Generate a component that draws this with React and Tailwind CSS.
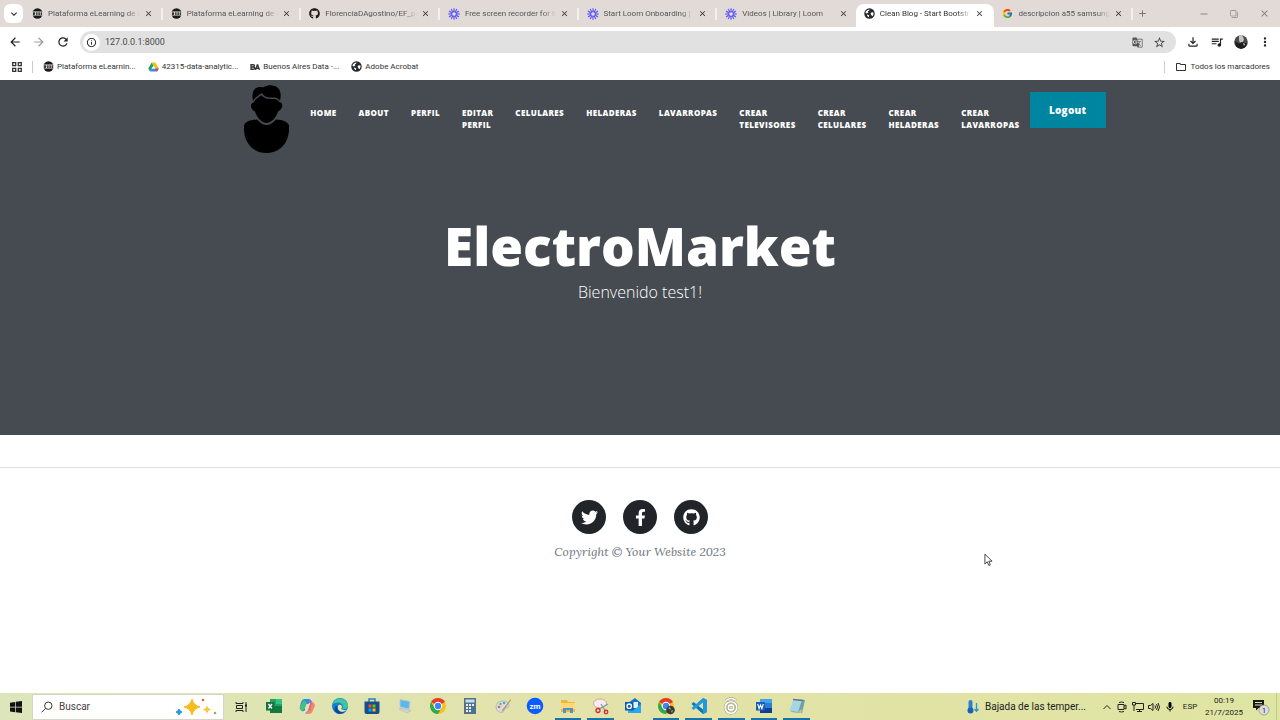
import React from "react";
import {
  MdClose, MdArrowBack, MdArrowForward, MdRefresh, MdInfoOutline, MdStarBorder, MdGTranslate,
  MdOutlineFileDownload, MdQueueMusic, MdMoreVert, MdOutlineFolder, MdKeyboardArrowDown, MdAdd,
  MdFilterNone, MdMic,
} from "react-icons/md";
import { FaTwitter, FaFacebookF, FaGithub } from "react-icons/fa";
import { FcGoogle } from "react-icons/fc";

const Dhouse = () => (
  <svg viewBox="0 0 12 12" className="size-[11px] shrink-0">
    <circle cx="6" cy="6" r="5.6" fill="#191919" />
    <rect x="0" y="3.8" width="12" height="4.4" rx="1" fill="#e8e8e8" />
    <path d="M1 4.5h1.6q1 0 1 1.5t-1 1.5H1zM4.5 4.5h1.6v3H4.5zM7 4.5h1.6v3H7zM9.4 4.5h1.6v3H9.4z" fill="#333" />
  </svg>
);

const Loom = () => (
  <svg viewBox="0 0 24 24" className="size-[12px] shrink-0">
    <g stroke="#625df5" strokeWidth="2.400">
      {[0, 30, 60, 90, 120, 150].map((a) => (
        <path key={a} d="M12 0.5v23" transform={`rotate(${a} 12 12)`} />
      ))}
    </g>
    <circle cx="12" cy="12" r="6" fill="#625df5" />
    <circle cx="12" cy="12" r="3.600" fill="#e6e0f0" />
  </svg>
);

const Globe = () => (
  <svg viewBox="0 0 16 16" className="size-[11px] shrink-0">
    <circle cx="8" cy="8" r="7.6" fill="#27292b" />
    <path d="M2.500 5.500C4 3.500 5.500 2.300 8 2.200L7.500 4l-1.800.8.5 1.700L4 8 2.200 7.200zM9.500 7.500L11.500 6l2.300.5c.3 2.300-.3 4-1.600 5.500L10.500 10zM4.500 9.500l3 1.200-.3 2.600C6 13 5 12.300 4.500 11z" fill="#fff" />
  </svg>
);

const Drive = () => (
  <svg viewBox="0 0 24 22" className="h-[10px] w-[11px] shrink-0">
    <path d="M8 1h8l7.500 13.500h-7.500z" fill="#fbbc05" />
    <path d="M8 14.500h15.500L20 21H4.200z" fill="#4285f4" />
    <path d="M0.500 14.500L8 1l4 7-7.800 13z" fill="#1ea362" />
    <path d="M12 8l4 6.500H8z" fill="#fff" />
    <path d="M23.500 14.500L20 21l-4-6.500z" fill="#ea4335" />
  </svg>
);

const tabs = [
  { title: "Plataforma eLearning de C", icon: <Dhouse /> },
  { title: "Plataforma eLearning de C", icon: <Dhouse /> },
  { title: "FlorenciaDAgostino/EF_pr", icon: <FaGithub className="size-[11px] shrink-0 text-[#1b1b1b]" /> },
  { title: "Free screen recorder for M", icon: <Loom /> },
  { title: "Start Loom Onboarding |", icon: <Loom /> },
  { title: "Videos | Library | Loom", icon: <Loom />, last: true },
  { title: "Clean Blog - Start Bootstr", icon: <Globe />, active: true },
  { title: "descripcion a55 samsung", icon: <FcGoogle className="size-[11px] shrink-0" /> },
];

function TabStrip() {
  return (
    <div className="flex h-[27px] items-center bg-[#e1dad6] pl-1">
      <button aria-label="Buscar pestañas" className="mr-px flex size-[19px] shrink-0 items-center justify-center rounded-md bg-white text-[#222]">
        <MdKeyboardArrowDown className="size-3" />
      </button>
      <div className="grid h-full max-w-[1109px] min-w-0 flex-1 grid-cols-8">
        {tabs.map((t, i) => (
          <div
            key={i}
            className={
              t.active
                ? "mt-1 flex min-w-0 items-center rounded-t-lg bg-white pr-0.5 pb-1 pl-2 text-[#333]"
                : "mt-1 flex min-w-0 items-center pb-1 pl-2 text-[#555]"
            }
          >
            {t.icon}
            <button className="ml-[5px] min-w-0 flex-1 overflow-hidden [mask-image:linear-gradient(to_right,black_85%,transparent)] text-left text-[8px] leading-3 whitespace-nowrap">
              {t.title}
            </button>
            <button aria-label="Cerrar pestaña" className="mr-2 ml-1 shrink-0 text-[#333]">
              <MdClose className="size-[9px]" />
            </button>
            {!t.active && !t.last && <span className="h-3 w-[2px] shrink-0 bg-[#f4f0ee]" />}
          </div>
        ))}
      </div>
      <button aria-label="Nueva pestaña" className="ml-1 text-[#777]"><MdAdd className="size-[11px]" /></button>
      <div className="ml-auto flex shrink-0 items-center gap-[21px] pr-2.5 text-[#888]">
        <button aria-label="Minimizar">
          <svg viewBox="0 0 10 10" className="size-2.5"><path d="M1.500 5h7" stroke="currentColor" /></svg>
        </button>
        <button aria-label="Restaurar"><MdFilterNone className="size-2 -scale-x-100" /></button>
        <button aria-label="Cerrar"><MdClose className="size-[11px]" /></button>
      </div>
    </div>
  );
}

function Toolbar() {
  return (
    <div className="flex h-[30px] items-center bg-white px-2 text-[#222]">
      <button aria-label="Atrás" className="flex w-6 shrink-0"><MdArrowBack className="size-3.5" /></button>
      <button aria-label="Adelante" className="flex w-6 shrink-0 text-[#999]"><MdArrowForward className="size-3.5" /></button>
      <button aria-label="Recargar" className="flex w-6 shrink-0"><MdRefresh className="size-3.5" /></button>
      <div className="flex h-[22px] min-w-0 flex-1 items-center rounded-full bg-[#e1e1e1] pr-2.5 pl-[3px]">
        <span className="flex size-[17px] shrink-0 items-center justify-center rounded-full bg-white">
          <MdInfoOutline className="size-[11px]" />
        </span>
        <input aria-label="Dirección" defaultValue="127.0.0.1:8000" className="ml-[5px] min-w-0 flex-1 bg-transparent text-[9px] leading-4 text-[#4c4c4c] outline-none" />
        <button aria-label="Traducir" className="mr-2.5 text-[#555]"><MdGTranslate className="size-[11px]" /></button>
        <button aria-label="Favorito" className="text-[#444]"><MdStarBorder className="size-[13px]" /></button>
      </div>
      <div className="ml-2.5 flex shrink-0 items-center gap-2.5">
        <button aria-label="Descargas"><MdOutlineFileDownload className="size-3.5" /></button>
        <button aria-label="Multimedia"><MdQueueMusic className="size-3.5" /></button>
        <button aria-label="Perfil del navegador">
          <svg viewBox="0 0 14 14" className="size-3.5">
            <circle cx="7" cy="7" r="6.800" fill="#4b4b4b" />
            <path d="M5 0.600L8 0l2 4-1 3-3 1-1-3z" fill="#c4c4c4" />
            <path d="M0.600 6l4 2.500L8 7l5 1.500-2 4-4 1.400-4.500-2z" fill="#1d1d1d" />
            <path d="M9 8l2 1-1 2z" fill="#ddd" />
          </svg>
        </button>
        <button aria-label="Menú"><MdMoreVert className="size-3.5" /></button>
      </div>
    </div>
  );
}

function Bookmarks() {
  const link = "flex items-center gap-[3px] whitespace-nowrap";
  return (
    <div className="flex h-[23px] items-center bg-white pr-2.5 pb-1 pl-3 text-[8px] leading-3 text-[#333]">
      <button aria-label="Aplicaciones">
        <svg viewBox="0 0 10 10" className="size-2.5" fill="none" stroke="#333" strokeWidth="1.300">
          <path d="M.7.7h3v3h-3zM6.300.7h3v3h-3zM.7 6.300h3v3h-3zM6.300 6.300h3v3h-3z" />
        </svg>
      </button>
      <span className="mx-2.5 h-3 w-px bg-[#ccc]" />
      <nav className="flex items-center gap-3" aria-label="Marcadores">
        <a href="#plataforma" className={link}><Dhouse />Plataforma eLearnin...</a>
        <a href="#drive" className={link}><Drive />42315-data-analytic...</a>
        <a href="#ba" className={link}>
          <svg viewBox="0 0 20 12" className="h-[6px] w-2.5" fill="none" stroke="#333" strokeWidth="2.600">
            <path d="M2 1.500h4q3 0 3 2.200T6 6q3.500 0 3.500 2.400T6 10.500H2zM2 6h4M11 12l3.500-10h1L19 12M12 8.500h6" />
          </svg>
          Buenos Aires Data -...
        </a>
        <a href="#acrobat" className={link}><Globe />Adobe Acrobat</a>
      </nav>
      <span className="mr-2.5 ml-auto h-3 w-px bg-[#ccc]" />
      <button className="flex items-center gap-1 whitespace-nowrap">
        <MdOutlineFolder className="size-3" />Todos los marcadores
      </button>
    </div>
  );
}

const navLinks = [
  "Home", "About", "Perfil", "Editar Perfil", "Celulares", "Heladeras", "Lavarropas",
  "Crear Televisores", "Crear Celulares", "Crear Heladeras", "Crear Lavarropas",
];

function Hero() {
  return (
    <header className="min-h-[355px] bg-[#464b51] text-center text-white">
      <div className="flex items-start justify-center pl-[70px]">
        <a href="#inicio" aria-label="Inicio" className="mt-[5px] mr-[21px] shrink-0">
          <svg viewBox="0 0 45 68" className="h-[68px] w-[45px]" fill="#000">
            <path d="M9 15.500C7.500 9 9 3 15 2 18 2 19 2.500 20 2 24-.5 31-.3 34 3c3 3 3.200 8 2 12.500-2-2.500-4-3-7.500-3-4.500 0-8 0-10.500-4.500C15 10 12 11.500 9 15.500z" />
            <path d="M9.500 17.500c2-3.500 5-5.500 8-7.200 3 3.500 6.500 3.700 10.700 3.700 3.500 0 6 .5 7.300 3.300 3 .2 3.300 3 2.200 5.500-.8 2-2 3-3.700 3.700C32 33 27 38 22.500 38S13 33 11 26.500c-2-.6-4-3-4-5.500 0-1.800 1-3.200 2.500-3.500z" />
            <path d="M13 34.500c3 3.500 6 5.500 9.500 5.500s6.500-2 9.500-5.500c7 .5 11.500 2 13 6 1 16-8 27.500-22.500 27.500S-1 56.500 0 40.500c1.500-4 6-5.500 13-6z" />
          </svg>
        </a>
        <nav className="mt-[27px]" aria-label="Principal">
          <ul className="flex gap-[22px] text-left text-[8px] leading-3 font-extrabold tracking-wider uppercase">
            {navLinks.map((n) => (
              <li key={n} className="w-min"><a href={`#${n.toLowerCase().replace(" ", "-")}`}>{n}</a></li>
            ))}
          </ul>
        </nav>
        <button className="mt-3 ml-2.5 h-9 w-[76px] shrink-0 bg-[#0085a1] text-[10px] font-extrabold tracking-wide">
          Logout
        </button>
      </div>
      <h1 className="mt-[63px] text-[53px] leading-[60px] font-extrabold">ElectroMarket</h1>
      <p className="mt-1 text-base leading-6 font-light">Bienvenido test1!</p>
    </header>
  );
}

function Footer() {
  const circle = "flex size-[34px] items-center justify-center rounded-full bg-[#212529] text-white";
  return (
    <footer className="mt-8 border-t border-[#dee2e6] pt-8 text-center">
      <div className="flex justify-center gap-[17px]">
        <a href="#twitter" aria-label="Twitter" className={circle}><FaTwitter className="size-[17px]" /></a>
        <a href="#facebook" aria-label="Facebook" className={circle}><FaFacebookF className="size-[17px]" /></a>
        <a href="#github" aria-label="GitHub" className={circle}><FaGithub className="size-[17px]" /></a>
      </div>
      <p className="mt-2.5 font-['Lora','Liberation_Serif',serif] text-[12px] leading-4 text-[#6c757d] italic">
        Copyright © Your Website 2023
      </p>
    </footer>
  );
}

const Svg = ({ children }) => <svg viewBox="0 0 18 18" className="size-[18px]">{children}</svg>;

const ChromeMark = () => (
  <>
    <circle cx="9" cy="9" r="8" fill="#fbc116" />
    <path d="M9 9L2.100 5A8 8 0 0 1 15.900 5z" fill="#e33b2e" />
    <path d="M2.100 5A8 8 0 0 0 9 17l3.500-6H5.600z" fill="#2da94f" />
    <circle cx="9" cy="9" r="4.200" fill="#fff" />
    <circle cx="9" cy="9" r="3.200" fill="#4285f4" />
  </>
);

const apps = [
  { name: "Excel", art: <Svg><path d="M5 2h12v14H5z" fill="#21a366" /><path d="M11 2h6v5h-6z" fill="#33c481" /><path d="M5 9h12v7H5z" fill="#107c41" /><rect x="1" y="5" width="8.500" height="8.500" fill="#17713f" /><path d="M3.500 7l3.500 4.500M7 7l-3.500 4.500" stroke="#fff" strokeWidth="1.300" /></Svg> },
  { name: "Copilot", art: <Svg><path d="M6 2h5q2 0 3 3l-3 1-4 7q-1 2-3 1-3-2-2-5 1-6 4-7z" fill="#2c8eea" /><path d="M6 3L9 6 5 14q-4-1-3-5z" fill="#4abf78" /><path d="M11 2l3 3q3 1 2.500 4L14 15q-1 1.500-3 1.500H7l3-3 2-7z" fill="#d35bc2" /><path d="M14 5q3 1 2.500 4L14 15q-1 1.500-3 1.500l-4-.2 5-3z" fill="#f78a49" /><path d="M8.500 7h3l-2 5h-3z" fill="#e4e1b4" /></Svg> },
  { name: "Edge", art: <Svg><circle cx="9" cy="9" r="8" fill="#1680cf" /><path d="M1.200 8A8 8 0 0 1 17 8.500c0 3-3 4-5.500 3.300C13 9 11 5.500 7 5.500 4 5.500 2 6.500 1.200 8z" fill="#41c6a0" /><path d="M6.500 9c-1 4 3 7.500 8 5.500A8 8 0 0 1 9 17C5 17 2 13 4.500 9z" fill="#0c4a96" /><path d="M7 9q1-2 3-1 2 2 0 4 3 2 6 .5-3 3-6.500 2Q6 12.500 7 9z" fill="#e7e6b5" /></Svg> },
  { name: "Store", art: <Svg><path d="M6 5V2h6v3" fill="none" stroke="#2b7fc4" strokeWidth="1.500" /><path d="M1.500 4.500h15V15q0 2-2 2h-11q-2 0-2-2z" fill="#164e8c" /><path d="M5.500 7.500h3v3h-3z" fill="#f25022" /><path d="M9.500 7.500h3v3h-3z" fill="#7fba00" /><path d="M5.500 11.500h3v3h-3z" fill="#00a4ef" /><path d="M9.500 11.500h3v3h-3z" fill="#ffb900" /></Svg> },
  { name: "Equipo", art: <Svg><path d="M4 2.500l10 2-1 7.500-9-2z" fill="#5bb8ec" stroke="#b4cbd6" /><path d="M3 12l4-1 8 2.500-4 2.500z" fill="#cfd3d2" stroke="#a7b1b5" strokeWidth=".5" /></Svg> },
  { name: "Chrome", art: <Svg><ChromeMark /></Svg> },
  { name: "Calculadora", art: <Svg><rect x="3" y="1" width="12" height="16" fill="#587083" /><path d="M4.500 2.500h9v3h-9z" fill="#bde4f4" /><path d="M5 7h2v2H5zM8 7h2v2H8zM11 7h2v2h-2zM5 10h2v2H5zM8 10h2v2H8zM5 13h2v2H5zM8 13h2v2H8z" fill="#e8eef2" /><path d="M11 10h2v5h-2z" fill="#2779c7" /></Svg> },
  { name: "Paint", art: <Svg><path d="M2 10q0-6 7-6 6 0 6 5 0 2-3 2-2 0-2 2 0 3-3 2.500-5-1-5-5.500z" fill="#d4dee0" stroke="#a2adb2" strokeWidth=".7" /><circle cx="5" cy="10" r="1.300" fill="#e56757" /><circle cx="6.500" cy="7" r="1.200" fill="#65b959" /><circle cx="10" cy="6" r="1.200" fill="#569fda" /><path d="M16.500 2L9 12l-2 3 3-2L17 3z" fill="#be9055" /></Svg> },
  { name: "Zoom", art: <Svg><circle cx="9" cy="9" r="8.300" fill="#0b5cff" /><text x="9" y="11.500" textAnchor="middle" fontSize="8" fontWeight="700" fill="#fff">zm</text></Svg> },
  { name: "Explorador", open: true, art: <Svg><path d="M2 3h6l1 2h7v10H2z" fill="#edb83c" /><path d="M2 6h14v6H2z" fill="#ffd875" /><path d="M4 16v-5h10v5h-3v-3H7v3z" fill="#4d93ca" /></Svg> },
  { name: "Recortes", open: true, art: <Svg><ellipse cx="8" cy="6.500" rx="6.500" ry="4.500" fill="#f6eeee" stroke="#d68b8b" strokeWidth=".8" /><path d="M7 12l9-5M9 7l5 8" stroke="#8c9a9f" strokeWidth="1.300" /><g fill="none" stroke="#d42b3a" strokeWidth="1.300"><circle cx="6" cy="13.500" r="2" /><circle cx="14" cy="15" r="1.800" /></g></Svg> },
  { name: "Outlook", art: <Svg><path d="M4 6l7-5 6 5v10H4z" fill="#1473c8" /><path d="M7 5h7v6H7z" fill="#e1f1fb" /><path d="M4 11l6 2 7-6v9H4z" fill="#28a8ea" /><rect x="1" y="5" width="8.500" height="8.500" fill="#0f5ca8" /><circle cx="5.200" cy="9.200" r="2.200" fill="none" stroke="#fff" strokeWidth="1.300" /></Svg> },
  { name: "Chrome perfil", open: true, art: <Svg><ChromeMark /><circle cx="13.500" cy="13" r="4.300" fill="#3a3836" /><path d="M11 11l2-1 1 3zM14 14l2-1-1 3z" fill="#b7aa9a" /></Svg> },
  { name: "Visual Studio Code", open: true, art: <Svg><path d="M13 1l4 2v12l-4 2L1.500 7 3.500 5 13 12.500z" fill="#0877b9" /><path d="M13 1l4 2v12l-4 2V5.500L3.500 13l-2-2z" fill="#2298df" /></Svg> },
  { name: "Grabadora", open: true, art: <Svg><g fill="none" stroke="#9b987c" strokeWidth="2.600"><path d="M4 3.500q5-4 10 0" /><circle cx="9" cy="10.500" r="5.800" /><circle cx="9" cy="10.500" r="2.600" /></g><g fill="none" stroke="#fff" strokeWidth="1.600"><path d="M4 3.500q5-4 10 0" /><circle cx="9" cy="10.500" r="5.800" /><circle cx="9" cy="10.500" r="2.600" /></g></Svg> },
  { name: "Word", open: true, art: <Svg><path d="M5 2h12v14H5z" fill="#2b7cd3" /><path d="M5 2h12v4H5z" fill="#41a5ee" /><path d="M5 11h12v5H5z" fill="#103f91" /><rect x="1" y="5" width="9" height="8.500" fill="#185abd" /><path d="M2.700 7l1.400 4.500L5.500 8l1.400 3.500L8.300 7" fill="none" stroke="#fff" strokeWidth="1.100" /></Svg> },
  { name: "Bloc de notas", open: true, art: <Svg><path d="M6 2l11 1-3 13-11-1z" fill="#6f9fac" /><path d="M6 2l8 1-4 12-9-1z" fill="#a5d6e2" /><path d="M5 2.500l10 1" stroke="#66767d" strokeWidth="1.300" /><path d="M10 15l4-3-1 4z" fill="#d8c58b" /></Svg> },
];

function Taskbar() {
  return (
    <div className="flex h-[27px] shrink-0 items-center bg-linear-to-r from-[#dde6bb] via-[#e3e2a8] to-[#dfe5a2] text-[#222]">
      <button aria-label="Inicio" className="flex w-8 shrink-0 justify-center">
        <svg viewBox="0 0 12 12" className="size-3"><path d="M0 1.700l5.300-.8v4.800H0zM6 .8L12 0v5.700H6zM0 6.400h5.300v4.800L0 10.400zM6 6.400h6V12l-6-.8z" fill="#111" /></svg>
      </button>
      <label className="flex h-[26px] w-48 shrink-0 items-center border border-[#d5d5c5] bg-white pr-1.5 pl-2">
        <svg viewBox="0 0 12 12" className="size-3 shrink-0" fill="none" stroke="#333"><circle cx="7.300" cy="4.700" r="3.700" /><path d="M4.600 7.400L.7 11.300" /></svg>
        <input aria-label="Buscar" placeholder="Buscar" className="ml-1.5 w-full min-w-0 text-[10px] leading-4 outline-none placeholder:text-[#444]" />
        <svg viewBox="0 0 42 18" className="h-[18px] w-[42px] shrink-0">
          <path d="M17 1q1.500 6.500 8 8-6.500 1.500-8 8-1.500-6.500-8-8 6.500-1.500 8-8z" fill="#f5bd1f" stroke="#f5bd1f" strokeWidth="1" />
          <path d="M32 7.500q.8 3.200 4 4-3.200.8-4 4-.8-3.200-4-4 3.200-.8 4-4z" fill="#f7c948" />
          <path d="M4 11q.6 2.400 3 3-2.400.6-3 3-.6-2.400-3-3 2.400-.6 3-3z" fill="#2196d8" stroke="#2196d8" />
          <circle cx="28" cy="2" r="1.300" fill="#dc6540" /><circle cx="40" cy="15" r="1.300" fill="#91b44c" />
        </svg>
      </label>
      <button aria-label="Vista de tareas" className="flex w-[34px] shrink-0 justify-center">
        <svg viewBox="0 0 13 12" className="h-3 w-[13px]" fill="none" stroke="#222"><path d="M1 1v1.500h7V1M1.500 4.500h6v3h-6zM1 11V9.500h7V11M11 1v10" /><path d="M10 3.500h2v2h-2z" fill="#222" stroke="none" /></svg>
      </button>
      <div className="grid h-full w-[555px] grid-cols-17">
        {apps.map((a) => (
          <button
            key={a.name}
            aria-label={a.name}
            className={a.open
              ? "mx-[3px] flex items-center justify-center border-b-2 border-[#1972a8]"
              : "flex items-center justify-center pb-0.5"}
          >
            {a.art}
          </button>
        ))}
      </div>
      <div className="ml-auto flex h-full shrink-0 items-center">
        <button className="flex items-center gap-1.5 text-[10px] leading-4 whitespace-nowrap">
          <svg viewBox="0 0 12 14" className="h-3.5 w-3"><rect x="1.500" y="0" width="4" height="10" rx="2" fill="#2c80d3" /><circle cx="3.500" cy="10.500" r="3" fill="#1662ba" /><path d="M9.500 3v8M7.500 9l2 2.300 2-2.300" fill="none" stroke="#2b91d8" strokeWidth="1.300" /></svg>
          Bajada de las temper...
        </button>
        <div className="ml-4 flex items-center gap-1">
          <button aria-label="Mostrar iconos ocultos"><svg viewBox="0 0 10 10" className="size-2.5" fill="none" stroke="#222"><path d="M1.500 7L5 3.500 8.500 7" /></svg></button>
          <button aria-label="Cámara"><svg viewBox="0 0 12 12" className="size-3" fill="none" stroke="#222"><path d="M3 1.500q2.500-1 5 0M3 10.500q2.500 1 5 0M2 3.500h6v5H2zM8 5l2-1v4L8 7" /></svg></button>
          <button aria-label="Red"><svg viewBox="0 0 12 12" className="size-3" fill="none" stroke="#222"><path d="M4 2.500h7.500v6H4M7.500 8.500v2M5 10.500h5M.5 1.500h3V4h-3zM2 4v6" /></svg></button>
          <button aria-label="Volumen"><svg viewBox="0 0 12 12" className="size-3" fill="none" stroke="#222"><path d="M.5 4.500h2l2.500-2v7l-2.500-2h-2zM7 4.500q1 1.500 0 3M8.500 3q2 3 0 6M10 2q3 4 0 8" /></svg></button>
          <button aria-label="Micrófono"><MdMic className="size-3 text-black" /></button>
        </div>
        <button className="ml-1.5 w-4 text-[8px] leading-3">ESP</button>
        <button className="ml-1.5 flex w-10 flex-col items-center text-[8px] leading-3"><span>00:19</span><span>21/7/2025</span></button>
        <button aria-label="Notificaciones" className="mr-1.5 ml-2">
          <svg viewBox="0 0 18 18" className="size-[18px]">
            <path d="M1 2h11v8H6.500L4 12.500V10H1z" fill="#1a1a1a" /><path d="M3 4.500h7M3 7h7" stroke="#e2e5a9" />
            <circle cx="12" cy="12" r="5" fill="#ddd" stroke="#888" strokeWidth=".7" /><text x="12" y="15" textAnchor="middle" fontSize="8" fill="#333">1</text>
          </svg>
        </button>
        <span className="mr-[3px] h-full w-px bg-[#c3c88d]" />
      </div>
    </div>
  );
}

export default function App() {
  return (
    <div className="relative flex min-h-screen flex-col bg-white font-['Roboto','Open_Sans',sans-serif]">
      <TabStrip />
      <Toolbar />
      <Bookmarks />
      <main className="flex-1 font-['Open_Sans','Noto_Sans',sans-serif]">
        <Hero />
        <Footer />
      </main>
      <Taskbar />
      <svg viewBox="0 0 10 15" className="pointer-events-none absolute top-[553px] left-[984px] h-[14px] w-[9px]">
        <path d="M1 1v11l2.600-2.500 1.800 4.200 1.700-.7-1.800-4.100H9z" fill="#fff" stroke="#222" strokeWidth=".9" />
      </svg>
    </div>
  );
}
